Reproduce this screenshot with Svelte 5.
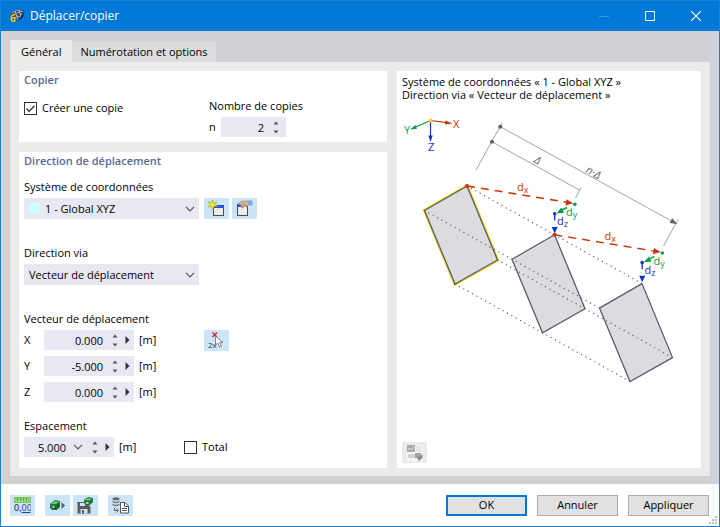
<script lang="ts">
  type Axis = { id: string; label: string; value: string };

  let createCopy = $state(true);
  let copies = $state('2');
  let system = $state('1 - Global XYZ');
  let direction = $state('Vecteur de déplacement');
  let spacing = $state('5.000');
  let total = $state(false);
  let tab = $state('general');

  let vector: Axis[] = $state([
    { id: 'x', label: 'X', value: '0.000' },
    { id: 'y', label: 'Y', value: '-5.000' },
    { id: 'z', label: 'Z', value: '0.000' }
  ]);

  // one displacement step per copy, starting at the upper corner of each plate
  const steps = [
    { x: 467, y: 186 },
    { x: 554.5, y: 234.8 }
  ];

  const plates = [
    { x: 467, y: 186 },
    { x: 554.5, y: 234.8 },
    { x: 642, y: 283.6 }
  ];

  // plate corners that are joined to the matching corners of the last copy
  const corners = [
    { x: 467, y: 186 },
    { x: 424.5, y: 210.5 },
    { x: 497.5, y: 260 },
    { x: 455, y: 284 }
  ];

  function step(value: string, delta: number, digits = 3) {
    return (Number(value) + delta).toFixed(digits);
  }
</script>

{#snippet spinner(up: () => void, down: () => void)}
  <span class="spinner">
    <button type="button" aria-label="Augmenter" onclick={up}>
      <svg width="6" height="4" viewBox="0 0 6 4"><path d="M0.5 3.5L3 0.5L5.5 3.5Z" /></svg>
    </button>
    <button type="button" aria-label="Diminuer" onclick={down}>
      <svg width="6" height="4" viewBox="0 0 6 4"><path d="M0.5 0.5L3 3.5L5.5 0.5Z" /></svg>
    </button>
  </span>
{/snippet}

{#snippet more()}
  <button type="button" class="more" aria-label="Plus">
    <svg width="5" height="8" viewBox="0 0 5 8"><path d="M0.5 0L4.5 4L0.5 8Z" /></svg>
  </button>
{/snippet}

{#snippet chevron()}
  <svg class="chevron" width="10" height="6" viewBox="0 0 10 6"><path d="M1 0.8L5 4.8L9 0.8" /></svg>
{/snippet}

<div class="window">
  <header class="titlebar">
    <svg class="logo" width="16" height="16" viewBox="0 0 16 16">
      <path d="M2 5L8 1L15 3L14 8L9 13L3 11Z" fill="#35465c" />
      <path d="M3 5L8 2L14 4M4 7L10 4L13 7M5 10L9 8L12 10M6 3L9 12M10 2L12 9" stroke="#a8b9c9" stroke-width="1" fill="none" />
      <path d="M9 13L15 4L14 9Z" fill="#17202e" />
      <text x="1" y="14" font-size="10" font-weight="700" fill="#f5c518">6</text>
    </svg>
    <h1>Déplacer/copier</h1>
    <button type="button" class="caption" aria-label="Réduire" disabled>
      <svg width="10" height="10" viewBox="0 0 10 10"><path d="M0 5.5H10" stroke="#3c97e0" /></svg>
    </button>
    <button type="button" class="caption" aria-label="Agrandir">
      <svg width="10" height="10" viewBox="0 0 10 10"><path d="M0.5 0.5H9.5V9.5H0.5Z" stroke="#fff" fill="none" /></svg>
    </button>
    <button type="button" class="caption" aria-label="Fermer">
      <svg width="10" height="10" viewBox="0 0 10 10"><path d="M0 0L10 10M10 0L0 10" stroke="#fff" stroke-width="1.2" /></svg>
    </button>
  </header>

  <main>
    <div class="tabs" role="tablist">
      <button type="button" role="tab" class:active={tab === 'general'} aria-selected={tab === 'general'} onclick={() => (tab = 'general')}>Général</button>
      <button type="button" role="tab" class:active={tab === 'options'} aria-selected={tab === 'options'} onclick={() => (tab = 'options')}>Numérotation et options</button>
    </div>

    <div class="page">
      <div class="left">
        <section>
          <h2>Copier</h2>
          <div class="copy">
            <label class="check"><input type="checkbox" bind:checked={createCopy} />Créer une copie</label>
            <div>
              <label class="caption-label" for="copies">Nombre de copies</label>
              <div class="row">
                <label class="short" for="copies">n</label>
                <div class="field count">
                  <input id="copies" type="text" bind:value={copies} />
                  {@render spinner(() => (copies = step(copies, 1, 0)), () => (copies = step(copies, -1, 0)))}
                </div>
              </div>
            </div>
          </div>
        </section>

        <section class="grow">
          <h2>Direction de déplacement</h2>

          <div class="group first">
            <label class="caption-label" for="system">Système de coordonnées</label>
            <div class="row">
              <div class="select">
                <span class="swatch"></span>
                <select id="system" class="with-swatch" bind:value={system}>
                  <option>1 - Global XYZ</option>
                </select>
                {@render chevron()}
              </div>
              <div class="tools">
                <button type="button" class="tool" aria-label="Nouveau système">
                  <svg width="17" height="17" viewBox="0 0 17 17">
                    <rect x="5.5" y="5.5" width="10" height="10" fill="#ececec" stroke="#4a4a4a" />
                    <rect x="6" y="5" width="10" height="3" fill="#2c4fe0" />
                    <path d="M4.5 0L5.6 3L9 2L7 4.5L9.5 6.5L6 6.3L5 9.5L3.6 6.5L0 7L2.4 4.6L0.5 1.6L3.6 2.8Z" fill="#f7f020" stroke="#a09a2a" stroke-width="0.6" />
                  </svg>
                </button>
                <button type="button" class="tool" aria-label="Modifier le système">
                  <svg width="17" height="17" viewBox="0 0 17 17">
                    <rect x="1.5" y="5.5" width="10" height="10" fill="#ececec" stroke="#4a4a4a" />
                    <rect x="1" y="4" width="5" height="3" fill="#2c4fe0" />
                    <path d="M2 4L5 1.5L12 1L13 5L10 7L8 6L7 8L5.5 7.5L5 5Z" fill="#d8b495" stroke="#9a7c66" stroke-width="0.7" />
                    <path d="M7 3.5L10 6M5.5 5L8 6.5" stroke="#9a7c66" stroke-width="0.7" />
                    <path d="M12 0.5H16.5V6L13 5Z" fill="#7fa8dc" />
                  </svg>
                </button>
              </div>
            </div>
          </div>

          <div class="group">
            <label class="caption-label" for="direction">Direction via</label>
            <div class="row">
              <div class="select">
                <select id="direction" bind:value={direction}>
                  <option>Vecteur de déplacement</option>
                </select>
                {@render chevron()}
              </div>
            </div>
          </div>

          <div class="group vector">
            <span class="caption-label">Vecteur de déplacement</span>
            <div class="row start">
              <div class="axes">
                {#each vector as axis (axis.id)}
                  <div class="row">
                    <label class="axis" for={axis.id}>{axis.label}</label>
                    <div class="field">
                      <input id={axis.id} type="text" bind:value={axis.value} />
                      {@render spinner(() => (axis.value = step(axis.value, 1)), () => (axis.value = step(axis.value, -1)))}
                      {@render more()}
                    </div>
                    <span class="unit">[m]</span>
                  </div>
                {/each}
              </div>
              <div class="tools">
                <button type="button" class="tool" aria-label="Sélectionner deux points">
                  <svg width="17" height="17" viewBox="0 0 17 17">
                    <path d="M4.5 0.5L9 5M9 0.5L4.5 5" stroke="#e0202c" stroke-width="1.4" />
                    <text x="0" y="16" font-size="8" fill="#333">2x</text>
                    <path d="M7.5 4L7.5 13L9.8 11L11.6 15L13.4 14.2L11.7 10.4H15Z" fill="#fff" stroke="#777" stroke-width="0.9" />
                  </svg>
                </button>
              </div>
            </div>
          </div>

          <div class="group last">
            <label class="caption-label" for="spacing">Espacement</label>
            <div class="row">
              <div class="spacing">
                <div class="field">
                  <input id="spacing" type="text" bind:value={spacing} />
                  <button type="button" class="drop" aria-label="Valeurs">{@render chevron()}</button>
                  {@render spinner(() => (spacing = step(spacing, 1)), () => (spacing = step(spacing, -1)))}
                  {@render more()}
                </div>
                <span class="unit">[m]</span>
              </div>
              <label class="check"><input type="checkbox" bind:checked={total} />Total</label>
            </div>
          </div>
        </section>
      </div>

      <section class="preview">
        <p>Système de coordonnées « 1 - Global XYZ »<br />Direction via « Vecteur de déplacement »</p>

        <svg class="diagram" viewBox="397 105 304 290">
          <defs>
            <marker id="dim" viewBox="0 0 7 6" refX="7" refY="3" markerWidth="7" markerHeight="6" markerUnits="userSpaceOnUse" orient="auto">
              <path d="M0 0.3L7 3L0 5.7Z" fill="#5d5b6b" />
            </marker>
          </defs>

          <!-- axes -->
          <g stroke-width="1.2">
            <path d="M430.5 120.5L447 122.7" stroke="#cc3300" />
            <path d="M445.5 120.6L452.5 123.4L445 124.6Z" fill="#cc3300" />
            <path d="M430.5 120.5L415 127.3" stroke="#00a040" />
            <path d="M415.4 125L410 129.5L417 128.8Z" fill="#00a040" />
            <path d="M430.5 120.5V136" stroke="#0b35c4" />
            <path d="M428.3 135.5H432.7L430.5 142Z" fill="#0b35c4" />
          </g>
          <circle cx="430.5" cy="120.5" r="2" fill="#ffd800" />
          <text x="453" y="128" fill="#cc3300">X</text>
          <text x="404" y="134" fill="#00a040">Y</text>
          <text x="428" y="151" fill="#0b35c4">Z</text>

          <!-- dimension lines -->
          <g stroke="#a3a2aa" fill="none">
            <path d="M502 123L476 170M581 187.5L575.5 198M678 219.5L663.5 246" />
            <path d="M492 141.7L580 190.4M500.3 126.7L677 224" marker-end="url(#dim)" />
          </g>
          <circle cx="492" cy="141.7" r="2" fill="#5d5b6b" />
          <circle cx="500.3" cy="126.7" r="2" fill="#5d5b6b" />
          <text class="dim" transform="translate(533 162) rotate(29)">Δ</text>
          <text class="dim" transform="translate(585 172) rotate(29)">n·Δ</text>

          {#each plates as plate, i}
            <g transform="translate({plate.x} {plate.y})">
              {#if i === 0}
                <path d="M0 0L-42.5 24.5L-12 98L30.5 74Z" fill="#dcdbe0" stroke="#f0dc00" stroke-width="3" />
              {/if}
              <path d="M0 0L-42.5 24.5L-12 98L30.5 74Z" fill="#dcdbe0" stroke="#5d5b6b" stroke-width="1.3" />
            </g>
          {/each}

          {#each corners as corner}
            <path class="dotted" d="M{corner.x} {corner.y}l175 97.5" />
          {/each}

          {#each steps as s}
            <g transform="translate({s.x} {s.y})">
              <path d="M0 0L100 16.3" stroke="#cc3300" stroke-width="1.4" stroke-dasharray="8 6" />
              <path d="M99.5 13.3L106 17.3L98.5 19.5Z" fill="#cc3300" />
              <circle r="2" fill="#cc3300" />
              <circle cx="107.8" cy="18.2" r="1.8" fill="#00a040" />
              <path d="M100 21.5L94 24.5" stroke="#00a040" stroke-width="1.4" />
              <path d="M94.5 21.6L89.5 27.2L97 27Z" fill="#00a040" />
              <circle cx="87.7" cy="27.8" r="1.8" fill="#0b35c4" />
              <path d="M87.7 28V34.5" stroke="#0b35c4" stroke-width="1.3" />
              <path d="M84.7 41H90.7L87.7 47.5Z" fill="#0b35c4" />
              <text x="50" y="5" fill="#cc3300">d<tspan class="sub" dy="2">x</tspan></text>
              <text x="99" y="30" fill="#00a040">d<tspan class="sub" dy="2">y</tspan></text>
              <text x="90" y="39" fill="#0b35c4">d<tspan class="sub" dy="2">z</tspan></text>
            </g>
          {/each}
        </svg>

        <button type="button" class="tool muted" aria-label="Images" disabled>
          <svg width="16" height="16" viewBox="0 0 16 16">
            <rect width="16" height="16" fill="#f7f7f7" />
            <rect x="0" y="0" width="8" height="7" fill="#a9a9a9" />
            <path d="M1 5L3 3L5 5L7 2" stroke="#ddd" fill="none" />
            <path d="M9 1H15V7H9Z" fill="#e4e4e4" />
            <path d="M1 9H8V13H1Z" fill="#d2d2d2" />
            <rect x="8" y="8" width="6" height="5" fill="#a2a2a2" />
            <path d="M15.5 9V13L12 16L10 13Z" fill="#8a8a8a" />
          </svg>
        </button>
      </section>
    </div>
  </main>

  <footer>
    <button type="button" class="tool" aria-label="Unités et décimales">
      <svg width="17" height="17" viewBox="0 0 17 17">
        <rect x="0.5" y="0.5" width="16" height="5" fill="#92d878" stroke="#79c45f" />
        <path d="M3.5 1V3.5M6.5 1V3.5M9.5 1V3.5M12.5 1V3.5" stroke="#4f9a3a" />
        <text x="0" y="14" font-size="9" fill="#111">0,<tspan fill="#1f3f9a">00</tspan></text>
        <path d="M7.5 15.5H16.5" stroke="#1f3f9a" />
      </svg>
    </button>
    <button type="button" class="tool gap" aria-label="Transférer">
      <svg width="17" height="17" viewBox="0 0 17 17">
        <path d="M1 7L6 3L11 4V10L8 13H3L1 11Z" fill="#1f7a3c" />
        <path d="M2 7L6 4L10 5L7 7Z" fill="#7cc08c" />
        <path d="M3 9H7V12H3ZM8 8L10 6V9L8 11Z" fill="#0f4f25" />
        <circle cx="4.5" cy="10" r="1.3" fill="#9bd3a6" />
        <path d="M12.5 5L16 8.5L12.5 12Z" fill="#56606a" />
      </svg>
    </button>
    <button type="button" class="tool near" aria-label="Enregistrer">
      <svg width="17" height="17" viewBox="0 0 17 17">
        <path d="M0.5 5H9L13.5 10V16.5H0.5Z" fill="#5a5a5a" />
        <path d="M3 6H8V9H3ZM3.5 12H10.5V16.5H3.5Z" fill="#cce4f7" />
        <path d="M5 13H7V16.5H5Z" fill="#5a5a5a" />
        <path d="M7 3L11 0L16 1V5L13 8H9L7 6Z" fill="#1f7a3c" />
        <path d="M8 3L11 1L15 2L12 3.5Z" fill="#7cc08c" />
        <path d="M9 5H11.5V7H9Z" fill="#9bd3a6" />
      </svg>
    </button>
    <button type="button" class="tool gap" aria-label="Importer de la base">
      <svg width="17" height="17" viewBox="0 0 17 17">
        <ellipse cx="4" cy="1.8" rx="3.5" ry="1.5" fill="#666" />
        <path d="M0.5 3.5Q4 6 7.5 3.5V5Q4 7.5 0.5 5ZM0.5 6.5Q4 9 7.5 6.5V8Q4 10.5 0.5 8Z" fill="#777" />
        <path d="M2.5 11V13.5H5.5M4.5 11.5L6.5 13.5L4.5 15.5" stroke="#555" fill="none" />
        <path d="M8.5 5.5H13L16.5 9V16H8.5Z" fill="#fff" stroke="#555" />
        <path d="M12.5 5.5V9.5H16.5M10 11.5H15M10 13.5H15" stroke="#555" fill="none" />
      </svg>
    </button>
    <div class="actions">
      <button type="button" class="primary">OK</button>
      <button type="button">Annuler</button>
      <button type="button">Appliquer</button>
    </div>
    <svg class="grip" width="8" height="8" viewBox="0 0 8 8">
      <path d="M6 0H8V2H6ZM3 3H5V5H3ZM6 3H8V5H6ZM0 6H2V8H0ZM3 6H5V8H3ZM6 6H8V8H6Z" fill="#bfbfbf" />
    </svg>
  </footer>
</div>

<style>
  :global(body) {
    margin: 0;
  }

  .window {
    box-sizing: border-box;
    display: flex;
    flex-direction: column;
    min-height: 100vh;
    border: 1px solid #1883d7;
    background: #d1d0d5;
    color: #000;
    font-family: 'Open Sans', 'Noto Sans', sans-serif;
    font-size: 11px;
    line-height: 16px;
  }

  button,
  input,
  select {
    box-sizing: border-box;
    margin: 0;
    padding: 0;
    border: 0;
    border-radius: 0;
    background: none;
    color: inherit;
    font: inherit;
  }

  svg {
    display: block;
  }

  /* Title bar */
  .titlebar {
    display: flex;
    align-items: center;
    height: 30px;
    padding-left: 8px;
    background: #0078d7;
    color: #fff;
  }

  h1 {
    flex: 1;
    margin: 0 0 0 5px;
    font-size: 12px;
    font-weight: 400;
  }

  .caption {
    display: grid;
    place-items: center;
    width: 46px;
    height: 30px;
  }

  /* Tabs */
  main {
    flex: 1;
    display: flex;
    flex-direction: column;
    padding: 9px 9px 8px;
  }

  .tabs {
    display: flex;
    align-items: flex-end;
  }

  .tabs button {
    height: 20px;
    padding: 0 8px;
    background: #dddddd;
  }

  .tabs button.active {
    height: 22px;
    padding: 2px 11px 0;
    background: #ebebeb;
  }

  .page {
    flex: 1;
    display: flex;
    gap: 10px;
    padding: 9px 9px 8px;
    background: #ebebeb;
  }

  .left {
    flex: 368 1 0;
    display: flex;
    flex-direction: column;
    gap: 10px;
  }

  section {
    box-sizing: border-box;
    padding: 1px 5px 5px;
    background: #fff;
  }

  .grow {
    flex: 1;
  }

  h2 {
    margin: 0;
    color: #576a94;
    font-size: 11px;
    font-weight: 600;
  }

  /* Form */
  .copy {
    display: flex;
    padding-top: 10px;
  }

  .copy .check {
    width: 185px;
    height: 20px;
  }

  .check {
    display: flex;
    align-items: center;
    gap: 5px;
    white-space: nowrap;
  }

  .check input {
    appearance: none;
    width: 13px;
    height: 13px;
    border: 1px solid #333;
    background: #fff;
  }

  .check input:checked {
    background: url("data:image/svg+xml,%3Csvg xmlns='http://www.w3.org/2000/svg' viewBox='0 0 11 11'%3E%3Cpath d='M1.5 5.5L4.2 8.2L9.5 2.7' fill='none' stroke='%23333' stroke-width='1.3'/%3E%3C/svg%3E");
  }

  .caption-label {
    display: block;
    margin-bottom: 3px;
    white-space: nowrap;
  }

  .row {
    display: flex;
    align-items: center;
  }

  .row.start {
    align-items: flex-start;
  }

  .short {
    width: 12px;
  }

  .field {
    display: flex;
    align-items: center;
    width: 90px;
    height: 20px;
    background: #e8e8f2;
  }

  .field.count {
    width: 65px;
  }

  .field input {
    flex: 1;
    min-width: 0;
    height: 20px;
    text-align: right;
  }

  .spinner {
    display: flex;
    flex-direction: column;
    gap: 5px;
    margin: 0 7px 0 9px;
  }

  .spinner button,
  .more,
  .drop {
    display: block;
  }

  .spinner path {
    fill: #555;
  }

  .more path {
    fill: #333;
  }

  .more {
    margin-right: 4px;
  }

  .drop {
    margin-left: 7px;
  }

  .unit {
    margin-left: 5px;
  }

  .group {
    margin-bottom: 26px;
  }

  .first {
    padding-top: 10px;
  }

  .select {
    position: relative;
    width: 175px;
    height: 21px;
    background: #e8e8f2;
  }

  .select select {
    appearance: none;
    width: 100%;
    height: 21px;
    padding: 0 20px 0 5px;
  }

  .select .with-swatch {
    padding-left: 21px;
  }

  .swatch {
    position: absolute;
    top: 5px;
    left: 5px;
    width: 11px;
    height: 11px;
    background: #ccffff;
    pointer-events: none;
  }

  .chevron {
    fill: none;
    stroke: #555;
    stroke-width: 1.2;
    pointer-events: none;
  }

  .select .chevron {
    position: absolute;
    top: 8px;
    right: 4px;
  }

  .tools {
    display: flex;
    gap: 3px;
    margin-left: 5px;
  }

  .tool {
    display: grid;
    place-items: center;
    width: 25px;
    height: 21px;
    background: #cce4f7;
  }

  .axes {
    display: flex;
    flex-direction: column;
    gap: 6px;
    width: 175px;
  }

  .axis {
    width: 20px;
  }

  .vector {
    margin-bottom: 16px;
  }

  .last {
    margin-bottom: 0;
  }

  .spacing {
    display: flex;
    align-items: center;
    width: 160px;
  }

  /* Preview */
  .preview {
    flex: 304 1 0;
    display: flex;
    flex-direction: column;
    padding: 4px 0 5px;
  }

  .preview p {
    margin: 0;
    padding-left: 5px;
    line-height: 13px;
  }

  .diagram {
    width: 100%;
    margin-top: 4px;
  }

  .diagram text {
    font-size: 11px;
  }

  .diagram .sub {
    font-size: 9px;
  }

  .diagram .dim {
    fill: #5d5b6b;
    font-style: italic;
  }

  .dotted {
    fill: none;
    stroke: #5d5b6b;
    stroke-width: 1.4;
    stroke-linecap: round;
    stroke-dasharray: 0 5;
  }

  .muted {
    margin: auto 0 0 5px;
    background: #ebebeb;
  }

  /* Footer */
  footer {
    position: relative;
    display: flex;
    align-items: center;
    height: 42px;
    padding: 0 10px 0 9px;
    background: #fff;
  }

  .gap {
    margin-left: 10px;
  }

  .near {
    margin-left: 3px;
  }

  .actions {
    display: flex;
    gap: 10px;
    margin-left: auto;
  }

  .actions button {
    width: 81px;
    height: 21px;
    border: 1px solid #adadad;
    background: #e1e1e1;
  }

  .actions .primary {
    border: 2px solid #0078d7;
  }

  .grip {
    position: absolute;
    right: 2px;
    bottom: 2px;
  }
</style>
